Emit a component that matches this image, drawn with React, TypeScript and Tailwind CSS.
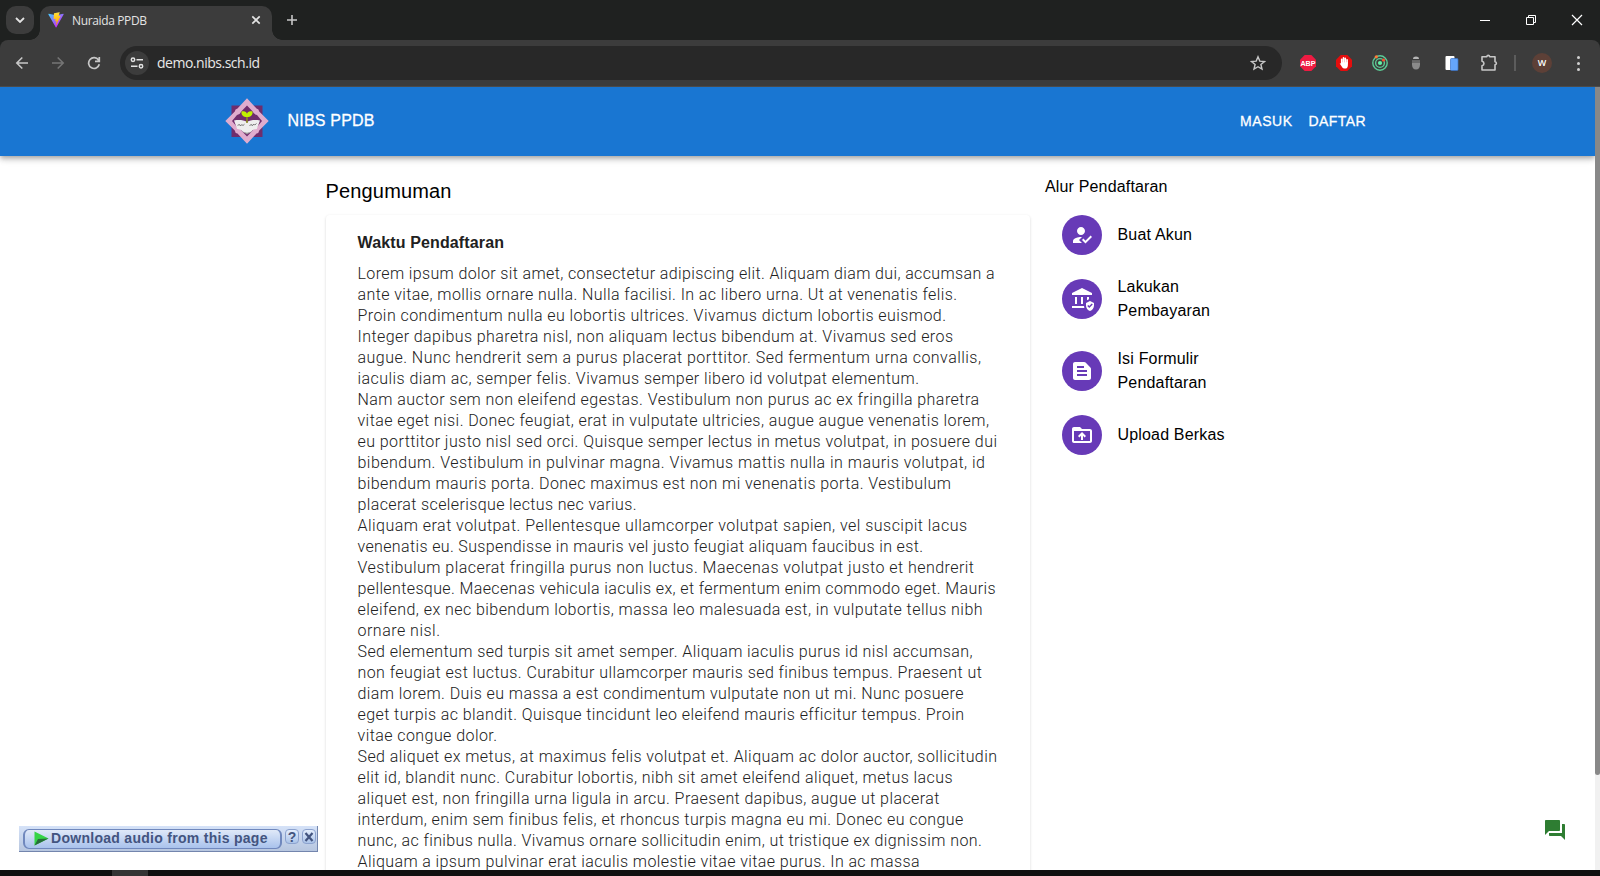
import { useLayoutEffect, useRef } from "react";
import type { ReactNode } from "react";
import {
  MdAssuredWorkload,
  MdDriveFolderUpload,
  MdHowToReg,
  MdQuestionAnswer,
  MdTextSnippet,
} from "react-icons/md";

/** One line of text, tracked so that it takes up the given width. */
function Fit({ w, className = "", children }: { w: number; className?: string; children: string }) {
  const ref = useRef<HTMLSpanElement>(null);
  useLayoutEffect(() => {
    const el = ref.current;
    if (!el) return;
    el.style.letterSpacing = "0px";
    const natural = el.getBoundingClientRect().width;
    el.style.letterSpacing = `${(w - natural) / Math.max(1, children.length - 1)}px`;
  }, [w, children]);
  return (
    <span className={`block whitespace-nowrap ${className}`}>
      <span ref={ref}>{children}</span>
    </span>
  );
}

const announcement: [string, number][] = [
  ["Lorem ipsum dolor sit amet, consectetur adipiscing elit. Aliquam diam dui, accumsan a", 637],
  ["ante vitae, mollis ornare nulla. Nulla facilisi. In ac libero urna. Ut at venenatis felis.", 599.5],
  ["Proin condimentum nulla eu lobortis ultrices. Vivamus dictum lobortis euismod.", 588.5],
  ["Integer dapibus pharetra nisl, non aliquam lectus bibendum at. Vivamus sed eros", 595.5],
  ["augue. Nunc hendrerit sem a purus placerat porttitor. Sed fermentum urna convallis,", 623.5],
  ["iaculis diam ac, semper felis. Vivamus semper libero id volutpat elementum.", 561.5],
  ["Nam auctor sem non eleifend egestas. Vestibulum non purus ac ex fringilla pharetra", 621.5],
  ["vitae eget nisi. Donec feugiat, erat in vulputate ultricies, augue augue venenatis lorem,", 631.5],
  ["eu porttitor justo nisl sed orci. Quisque semper lectus in metus volutpat, in posuere dui", 639.5],
  ["bibendum. Vestibulum in pulvinar magna. Vivamus mattis nulla in mauris volutpat, id", 627.5],
  ["bibendum mauris porta. Donec maximus est non mi venenatis porta. Vestibulum", 593.5],
  ["placerat scelerisque lectus nec varius.", 279],
  ["Aliquam erat volutpat. Pellentesque ullamcorper volutpat sapien, vel suscipit lacus", 609.5],
  ["venenatis eu. Suspendisse in mauris vel justo feugiat aliquam faucibus in est.", 565.5],
  ["Vestibulum placerat fringilla purus non luctus. Maecenas volutpat justo et hendrerit", 616.5],
  ["pellentesque. Maecenas vehicula iaculis ex, et fermentum enim commodo eget. Mauris", 638],
  ["eleifend, ex nec bibendum lobortis, massa leo malesuada est, in vulputate tellus nibh", 625],
  ["ornare nisl.", 82.5],
  ["Sed elementum sed turpis sit amet semper. Aliquam iaculis purus id nisl accumsan,", 615],
  ["non feugiat est luctus. Curabitur ullamcorper mauris sed finibus tempus. Praesent ut", 624],
  ["diam lorem. Duis eu massa a est condimentum vulputate non ut mi. Nunc posuere", 606],
  ["eget turpis ac blandit. Quisque tincidunt leo eleifend mauris efficitur tempus. Proin", 605.5],
  ["vitae congue dolor.", 139.5],
  ["Sed aliquet ex metus, at maximus felis volutpat et. Aliquam ac dolor auctor, sollicitudin", 639.5],
  ["elit id, blandit nunc. Curabitur lobortis, nibh sit amet eleifend aliquet, metus lacus", 595],
  ["aliquet est, non fringilla urna ligula in arcu. Praesent dapibus, augue ut placerat", 582],
  ["interdum, enim sem finibus felis, et rhoncus turpis magna eu mi. Donec eu congue", 605.5],
  ["nunc, ac finibus nulla. Vivamus ornare sollicitudin enim, ut tristique ex dignissim non.", 624],
  ["Aliquam a ipsum pulvinar erat iaculis molestie vitae vitae purus. In ac massa", 562],
];

const steps: { icon: ReactNode; lines: [string, number][] }[] = [
  { icon: <MdHowToReg size={24} />, lines: [["Buat Akun", 74.5]] },
  { icon: <MdAssuredWorkload size={24} />, lines: [["Lakukan", 61.5], ["Pembayaran", 92.5]] },
  { icon: <MdTextSnippet size={24} />, lines: [["Isi Formulir", 81], ["Pendaftaran", 89]] },
  { icon: <MdDriveFolderUpload size={24} />, lines: [["Upload Berkas", 107]] },
];

function TabStrip() {
  return (
    <div className="flex h-10 shrink-0 items-end bg-[#1f2120]">
      <div className="mb-[6px] ml-[6px] flex h-7 w-7 items-center justify-center rounded-[10px] bg-[#3c3c3c]">
        <svg width="10" height="6" viewBox="0 0 10 6" fill="none" stroke="#e3e3e3" strokeWidth="1.8">
          <path d="M1 1l4 4 4-4" />
        </svg>
      </div>
      <div className="-ml-1 h-[10px] w-[10px] bg-[radial-gradient(circle_at_0_0,transparent_9.5px,#3c3c3c_10px)]" />
      <div className="flex h-[34px] w-[232px] items-center rounded-t-[10px] bg-[#3c3c3c] pb-[6px] pl-2 pr-[10px]">
        <svg width="16" height="16" viewBox="0 0 410 404" fill="none">
          <defs>
            <linearGradient id="v1" x1="6" y1="33" x2="235" y2="344" gradientUnits="userSpaceOnUse">
              <stop stopColor="#41D1FF" />
              <stop offset="1" stopColor="#BD34FE" />
            </linearGradient>
            <linearGradient id="v2" x1="194" y1="8" x2="236" y2="292" gradientUnits="userSpaceOnUse">
              <stop stopColor="#FFEA83" />
              <stop offset=".08" stopColor="#FFDD35" />
              <stop offset="1" stopColor="#FFA800" />
            </linearGradient>
          </defs>
          <path d="M399.6 59.5 215.6 388.5c-3.8 6.8-13.5 6.8-17.4.1L10.6 59.6c-4.2-7.4 2.1-16.3 10.4-14.8l184.2 32.9c1.2.2 2.4.2 3.5 0l180.3-32.9c8.3-1.5 14.7 7.4 10.6 14.7Z" fill="url(#v1)" />
          <path d="M293 1.6 156.8 28.2c-2.2.5-3.9 2.4-4 4.6l-8.4 141.6c-.2 3.3 2.9 5.9 6.1 5.2l37.9-8.8c3.6-.8 6.8 2.3 6 5.9l-11.3 55.2c-.7 3.7 2.7 6.9 6.3 5.8l23.4-7.1c3.7-1.1 7.1 2.1 6.3 5.8l-17.9 86.600c-1.1 5.4 6.1 8.4 9.1 3.7l2-3.1L323.4 102c1.9-3.7-1.3-7.9-5.4-7.1l-39 7.5c-3.7.7-6.8-2.7-5.7-6.3l25.4-88.2c1-3.6-2.1-7.1-5.7-6.3Z" fill="url(#v2)" />
        </svg>
        <Fit w={75} className="ml-2 flex-1 pt-px font-['Open_Sans','Noto_Sans',sans-serif] text-[12px] leading-4 text-[#e3e3e3]">Nuraida PPDB</Fit>
        <svg width="12" height="12" viewBox="0 0 12 12" fill="none" stroke="#e3e3e3" strokeWidth="1.7">
          <path d="M2.300 2.300l7.400 7.400M9.700 2.300l-7.400 7.400" />
        </svg>
      </div>
      <div className="h-[10px] w-[10px] bg-[radial-gradient(circle_at_100%_0,transparent_9.5px,#3c3c3c_10px)]" />
      <svg className="mb-[14px] ml-1" width="12" height="12" viewBox="0 0 12 12" fill="none" stroke="#c7c7c7" strokeWidth="1.6">
        <path d="M6 1v10M1 6h10" />
      </svg>
      <div className="mb-[14px] ml-auto mr-[17px] flex items-center gap-[34px]">
        <svg width="12" height="12" viewBox="0 0 12 12" stroke="#fff"><path d="M1 6.5h10" /></svg>
        <svg width="12" height="12" viewBox="0 0 12 12" fill="none" stroke="#fff">
          <path d="M1.500 3.500h7v7h-7zM3.500 3.500v-2h7v7h-2" />
        </svg>
        <svg width="12" height="12" viewBox="0 0 12 12" stroke="#fff" strokeWidth="1.2"><path d="M1 1l10 10M11 1L1 11" /></svg>
      </div>
    </div>
  );
}

function Toolbar() {
  return (
    <div className="shrink-0 bg-[#1f2120]">
      <div className="flex h-[47px] items-center rounded-t-lg border-b border-[#4b4b4b] bg-[#3c3c3c]">
        <svg className="ml-[15px]" width="14" height="14" viewBox="0 0 14 14" fill="none" stroke="#c7c7c7" strokeWidth="1.6">
          <path d="M13 7H2M7.300 1.500L1.800 7l5.500 5.500" />
        </svg>
        <svg className="ml-[22px]" width="14" height="14" viewBox="0 0 14 14" fill="none" stroke="#757575" strokeWidth="1.600">
          <path d="M1 7h11M6.700 1.500L12.200 7l-5.500 5.500" />
        </svg>
        <svg className="ml-[22px]" width="14" height="14" viewBox="0 0 14 14" fill="none" stroke="#c7c7c7" strokeWidth="1.7">
          <path d="M12.300 8.300A5.400 5.400 0 1 1 11.500 4M12.300 1v4.300H8" />
        </svg>
        <div className="ml-[19px] flex h-[34px] w-[1162px] items-center rounded-full bg-[#282828] pl-[5px] pr-4">
          <div className="flex h-6 w-6 items-center justify-center rounded-full bg-[#3c3c3c]">
            <svg width="14" height="12" viewBox="0 0 14 12" fill="none" stroke="#e3e3e3" strokeWidth="1.5">
              <circle cx="3" cy="2.800" r="1.700" />
              <path d="M6.500 2.800H13M1 9.200h6.500" />
              <circle cx="11" cy="9.200" r="1.700" />
            </svg>
          </div>
          <Fit w={103} className="ml-2 flex-1 font-['Open_Sans','Noto_Sans',sans-serif] text-[14px] leading-5 text-[#e8e8e8]">demo.nibs.sch.id</Fit>
          <svg width="16" height="16" viewBox="0 0 16 16" fill="none" stroke="#c7c7c7" strokeWidth="1.400">
            <path d="M8 1.800l1.800 4.300 4.700.4-3.600 3 1.100 4.600L8 11.700l-4 2.400 1.100-4.600-3.600-3 4.700-.4z" />
          </svg>
        </div>
        <svg className="ml-[18px] overflow-visible" width="16" height="16" viewBox="0 0 16 16">
          <path d="M4.700 0h6.600L16 4.700v6.600L11.300 16H4.700L0 11.300V4.700z" fill="#ee1b42" />
          <text x="8" y="10.800" textAnchor="middle" fontFamily="Liberation Sans, sans-serif" fontWeight="700" fontSize="7.200" fill="#fff">ABP</text>
        </svg>
        <svg className="ml-5" width="16" height="16" viewBox="0 0 16 16">
          <path d="M4.700 0h6.600L16 4.700v6.600L11.300 16H4.700L0 11.300V4.700z" fill="#e40d0d" />
          <path d="M5.700 8V4.200M7.500 7.500V2.900M9.300 7.500V3.200M11.100 8V4.700" stroke="#fff" strokeWidth="1.600" strokeLinecap="round" />
          <path d="M5.100 7.200h6.800v3c0 2-1 3.400-3 3.400-1.600 0-2.400-.8-3.200-2.200L3.700 8.600c.5-.7 1-.5 1.400 0z" fill="#fff" />
        </svg>
        <svg className="ml-5" width="16" height="16" viewBox="0 0 16 16" fill="none" stroke="#5ccb96" strokeWidth="1.400">
          <circle cx="8" cy="8" r="7.200" />
          <circle cx="8" cy="8" r="4.400" />
          <circle cx="8" cy="8" r="2.100" fill="#63f0a4" stroke="none" />
          <circle cx="4.300" cy="1.800" r="1.600" fill="#ff7a36" stroke="none" />
          <circle cx="11.500" cy="5" r="1.600" fill="#f8502e" stroke="none" />
        </svg>
        <svg className="ml-5" width="16" height="16" viewBox="0 0 16 16">
          <path d="M5 4C5 .8 11 .8 11 4z" fill="#b5b5b5" />
          <path d="M4 5.500h8v4C12 12.500 10.500 14.500 8 14.500S4 12.500 4 9.500z" fill="#8a8a8a" />
          <path d="M4 5.500h8v2.500H4z" fill="#696969" />
        </svg>
        <svg className="ml-5" width="16" height="16" viewBox="0 0 16 16">
          <rect x="1.500" y="1" width="9" height="14" rx="1" fill="#fff" />
          <rect x="6.500" y="3.500" width="7.500" height="12" rx="1" fill="#65a5fb" stroke="#3b73c7" strokeWidth=".7" />
        </svg>
        <svg className="ml-5" width="18" height="18" viewBox="0 0 18 18" fill="none" stroke="#c7c7c7" strokeWidth="1.600" strokeLinejoin="round">
          <path d="M2 2.700h4.800c.3-1.800 2.600-1.800 2.900 0H15v5c1.900.2 1.900 2.700 0 3V16H2v-4.300c2.600-.5 2.600-3.900 0-4.400z" />
        </svg>
        <div className="ml-4 h-4 w-[2px] bg-[#5c5c5c]" />
        <div className="ml-4 flex h-5 w-5 items-center justify-center rounded-full bg-[#5d4037] font-['Open_Sans',sans-serif] text-[9px] font-semibold text-white">W</div>
        <div className="ml-[25px] flex flex-col gap-[3px]">
          <div className="h-[3px] w-[3px] rounded-full bg-[#d0d0d0]" />
          <div className="h-[3px] w-[3px] rounded-full bg-[#d0d0d0]" />
          <div className="h-[3px] w-[3px] rounded-full bg-[#d0d0d0]" />
        </div>
      </div>
    </div>
  );
}

function Logo() {
  return (
    <svg className="mb-px" width="44" height="46" viewBox="0 0 44 46">
      <path d="M6.500 7.500h31v31.500h-31z" fill="#702d6c" />
      <path d="M22 .3L31.500 10.500Q34 10.800 34.200 13.500L43.700 23 34.200 32.500Q34 35.200 31.500 35.500L22 45.700 12.500 35.500Q10 35.200 9.800 32.500L.3 23 9.800 13.500Q10 10.800 12.500 10.500z" fill="#e0acce" />
      <path d="M22 7.500l5.500 5.800q1 2.700 4.500 3.700L37 23l-5 6q-3.500 1-4.500 3.700L22 38.500l-5.500-5.800q-1-2.700-4.500-3.700L7 23l5-6q3.500-1 4.500-3.700z" fill="#702d6c" />
      <path d="M9 22.500c5-1 9.500-.5 13 1.500 3.500-2 8-2.500 13-1.500l-3.200 8.500c-2.300 0-4.300 1-5.300 2.500-2.500 2-6.500 2-9 0-1-1.500-3-2.500-5.300-2.500z" fill="#eeeeee" />
      <path d="M17.500 33.500c3 1.500 6 1.500 9 0L22 36.500z" fill="#999" />
      <path d="M12.500 27.300l2-.8.5 1.200 2-1 1 .8 1.500-1.300M24.500 27.500l2-1 .5 1.200 2-1.500.8.8 1.700-1.500" fill="none" stroke="#777" strokeWidth="1" />
      <path d="M22 18v7" stroke="#8c8b20" strokeWidth="1.600" />
      <path d="M16.500 13.500c3-.8 5 .2 5.500 2.200.5-2 2.500-3 5.500-2.200.5 3.500-1.500 5.500-5.500 5.500s-6-2-5.500-5.500z" fill="#c0f000" />
    </svg>
  );
}

function DownloadBar() {
  return (
    <div className="absolute left-[19px] top-[739px] flex h-[26px] w-[299px] items-center border-b border-r border-[#7385ad] bg-gradient-to-b from-[#d5e2f8] to-[#b7c6df] pl-1">
      <div className="flex h-5 w-[259px] items-center rounded-[6px] border border-x-2 border-[#7088bd] bg-gradient-to-b from-[#e0e9f8] to-[#a9c2ec] pl-[9px]">
        <svg width="15" height="15" viewBox="0 0 15 15">
          <path d="M.500.500L14.500 7.500.500 14.500z" fill="#35d447" />
          <path d="M.500 14.500L4 8l10.500-.5z" fill="#276c3a" />
        </svg>
        <Fit w={216.5} className="mb-px ml-[2px] font-['Liberation_Sans',sans-serif] text-[14px] font-bold leading-4 text-[#43547f]">Download audio from this page</Fit>
      </div>
      <div className="mb-1 ml-[3px] flex h-[15px] w-[14px] items-center justify-center rounded-[4px] border border-[#8ca2ce] bg-gradient-to-b from-[#e3edfc] to-[#abc3e8] font-['Liberation_Sans',sans-serif] text-[14px] font-bold leading-none text-[#43547f]">?</div>
      <div className="mb-1 ml-[3px] flex h-[15px] w-[14px] items-center justify-center rounded-[4px] border border-[#8ca2ce] bg-gradient-to-b from-[#e3edfc] to-[#abc3e8]">
        <svg width="10" height="10" viewBox="0 0 10 10" stroke="#43547f" strokeWidth="2.200"><path d="M1.500 1l7 8M8.500 1l-7 8" /></svg>
      </div>
    </div>
  );
}

export default function App() {
  return (
    <div className="flex h-[876px] w-[1600px] flex-col overflow-hidden bg-white">
      <TabStrip />
      <Toolbar />
      <div className="relative flex min-h-0 flex-1 overflow-hidden font-['Liberation_Sans',Arial,sans-serif]">
        <div className="flex w-[1595px] flex-col overflow-hidden">
          <header className="flex h-[69px] shrink-0 items-center bg-[#1976d2] pl-[225px] text-white shadow-[0_2px_4px_-1px_rgba(0,0,0,0.2),0_4px_5px_0_rgba(0,0,0,0.14),0_1px_10px_0_rgba(0,0,0,0.12)]">
            <Logo />
            <Fit w={87} className="ml-[18.5px] pb-px text-[16px] leading-6 [-webkit-text-stroke:0.3px_#fff]">NIBS PPDB</Fit>
            <nav className="mb-[2px] ml-auto mr-[229px] flex gap-4 text-[14px] leading-6 [-webkit-text-stroke:0.3px_#fff]">
              <Fit w={52}>MASUK</Fit>
              <Fit w={57}>DAFTAR</Fit>
            </nav>
          </header>
          <div className="flex min-h-0 flex-1 pl-[325px]">
            <main className="w-[705px] pt-[19px]">
              <Fit w={126} className="ml-[0.5px] text-[20px] leading-8 text-black">Pengumuman</Fit>
              <article className="ml-px mt-2 h-[900px] rounded bg-white pl-[31.5px] pr-8 pt-4 shadow-[0_1px_3px_rgba(0,0,0,0.16)]">
                <Fit w={146.5} className="text-[16px] font-bold leading-6 text-[#212121]">Waktu Pendaftaran</Fit>
                <div className="pt-[8px] font-['Roboto',sans-serif] text-[16px] font-light leading-[21px] text-[#212121]">
                  {announcement.map(([text, w]) => (
                    <Fit key={text} w={w}>{text}</Fit>
                  ))}
                </div>
              </article>
            </main>
            <aside className="ml-[15px] pt-[19px] text-[16px] leading-6 text-black">
              <Fit w={122.5}>Alur Pendaftaran</Fit>
              <ul className="mt-2 pl-[17px]">
                {steps.map((step) => (
                  <li key={step.lines[0][0]} className="flex items-center gap-[15.5px] py-2">
                    <div className="flex h-10 w-10 items-center justify-center rounded-full bg-[#673ab7] text-white">{step.icon}</div>
                    <div className={step.lines.length > 1 ? "py-1" : ""}>
                      {step.lines.map(([text, w]) => (
                        <Fit key={text} w={w}>{text}</Fit>
                      ))}
                    </div>
                  </li>
                ))}
              </ul>
            </aside>
          </div>
        </div>
        <div className="w-[5px] bg-[#f1f1f1]">
          <div className="h-[688px] rounded-b-sm bg-[#888]" />
        </div>
        <DownloadBar />
        <MdQuestionAnswer size={24} className="absolute left-[1543px] top-[731px] text-[#2e7d32]" />
      </div>
      <div className="h-[6px] shrink-0 bg-[#0f0f0f] pl-[112px]">
        <div className="h-full w-9 bg-[#343434]" />
      </div>
    </div>
  );
}
